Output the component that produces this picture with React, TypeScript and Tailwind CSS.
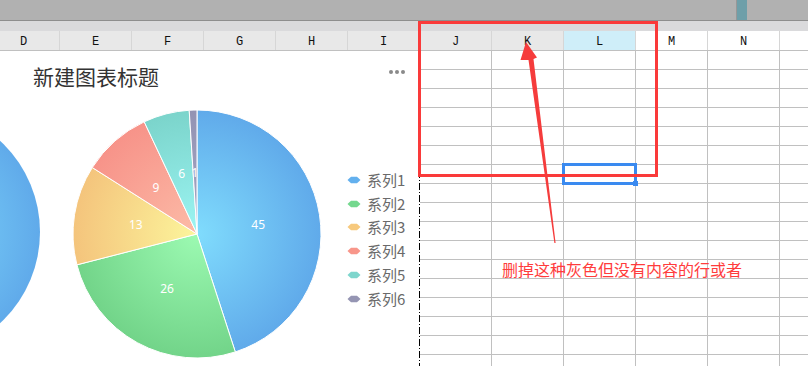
import React from "react";

const CJK = "'Noto Sans CJK SC', 'Noto Sans', sans-serif";

type Slice = { value: number; inner: string; outer: string; legend: string };

const slices: Slice[] = [
    { value: 45, inner: "#80dcfd", outer: "#60aaea", legend: "#63b0ee" },
    { value: 26, inner: "#9cfab2", outer: "#72d489", legend: "#74d88e" },
    { value: 13, inner: "#fcf59c", outer: "#f4c47c", legend: "#f7c97d" },
    { value: 9, inner: "#fcbba7", outer: "#f79389", legend: "#f8968a" },
    { value: 6, inner: "#9cf5f3", outer: "#7bd4cb", legend: "#7ed6cd" },
    { value: 1, inner: "#a6a6c4", outer: "#9393b3", legend: "#9595b3" },
];

const headerCols = [
    { label: "D", bg: "bg-[#e8e8e8]" },
    { label: "E", bg: "bg-[#e8e8e8]" },
    { label: "F", bg: "bg-[#e8e8e8]" },
    { label: "G", bg: "bg-[#e8e8e8]" },
    { label: "H", bg: "bg-[#e8e8e8]" },
    { label: "I", bg: "bg-[#e8e8e8]" },
    { label: "J", bg: "bg-[#e8e8e8]" },
    { label: "K", bg: "bg-[#e8e8e8]" },
    { label: "L", bg: "bg-[#cfeef9]" },
    { label: "M", bg: "bg-white" },
    { label: "N", bg: "bg-white" },
    { label: "", bg: "bg-white" },
];

const CX = 197;
const CY = 134;
const R = 124;

function pt(angle: number, r: number) {
    const rad = (angle * Math.PI) / 180;
    return [CX + r * Math.sin(rad), CY - r * Math.cos(rad)];
}

function PieChart() {
    const total = slices.reduce((s, x) => s + x.value, 0);
    let start = 0;
    const parts = slices.map((s, i) => {
        const sweep = (s.value / total) * 360;
        const a0 = start;
        const a1 = start + sweep;
        start = a1;
        const [x0, y0] = pt(a0, R);
        const [x1, y1] = pt(a1, R);
        const large = sweep > 180 ? 1 : 0;
        const d = `M${CX},${CY} L${x0},${y0} A${R},${R} 0 ${large} 1 ${x1},${y1} Z`;
        const [lx, ly] = pt((a0 + a1) / 2, R * 0.5);
        return { d, lx, ly, i, value: s.value };
    });

    return (
        <svg width={330} height={266} className="shrink-0">
            <defs>
                {slices.map((s, i) => (
                    <radialGradient key={i} id={`g${i}`} cx={CX} cy={CY} r={R} gradientUnits="userSpaceOnUse">
                        <stop offset="0%" stopColor={s.inner} />
                        <stop offset="100%" stopColor={s.outer} />
                    </radialGradient>
                ))}
                <radialGradient id="gl" cx={-84} cy={132} r={124} gradientUnits="userSpaceOnUse">
                    <stop offset="0%" stopColor="#80dcfd" />
                    <stop offset="100%" stopColor="#60aaea" />
                </radialGradient>
            </defs>
            <circle cx={-84} cy={132} r={124} fill="url(#gl)" />
            {parts.map((p) => (
                <path key={p.i} d={p.d} fill={`url(#g${p.i})`} stroke="#fff" strokeWidth={1} strokeLinejoin="round" />
            ))}
            {parts.map((p) => (
                <text
                    key={`t${p.i}`}
                    x={p.lx}
                    y={p.ly}
                    fill="#fff"
                    fontSize={12}
                    textAnchor="middle"
                    dominantBaseline="central"
                    style={{ fontFamily: "'Noto Sans', sans-serif" }}
                >
                    {p.value}
                </text>
            ))}
        </svg>
    );
}

function Legend() {
    return (
        <div className="ml-[17px] flex flex-col pt-[68px]">
            {slices.map((s, i) => (
                <div key={i} className="flex h-[23.8px] items-center gap-[6px]">
                    <svg width={14} height={8}>
                        <path d="M0.5,4 L4,0.8 L10,0.8 L13.5,4 L10,7.2 L4,7.2 Z" fill={s.legend} />
                    </svg>
                    <span className="text-[15px] leading-[16px] text-[#6a6a6a]" style={{ fontFamily: CJK }}>
                        系列{i + 1}
                    </span>
                </div>
            ))}
        </div>
    );
}

function ChartPanel() {
    return (
        <div className="flex w-[419px] shrink-0 flex-col bg-white">
            <div className="flex h-[49px] justify-between">
                <span
                    className="pl-[33px] pt-[15px] text-[21px] leading-[21px] text-[#333]"
                    style={{ fontFamily: CJK }}
                >
                    新建图表标题
                </span>
                <div className="flex gap-[2px] pr-[14px] pt-[19px]">
                    <div className="h-[4px] w-[4px] rounded-full bg-[#8a8a8a]" />
                    <div className="h-[4px] w-[4px] rounded-full bg-[#8a8a8a]" />
                    <div className="h-[4px] w-[4px] rounded-full bg-[#8a8a8a]" />
                </div>
            </div>
            <div className="flex">
                <PieChart />
                <Legend />
            </div>
        </div>
    );
}

function Grid() {
    const cells = Array.from({ length: 17 * 6 });
    return (
        <div className="grid grid-cols-[repeat(6,72px)] auto-rows-[19px]">
            {cells.map((_, i) => (
                <div key={i} className="border-r border-b border-[#c0c0c0]" />
            ))}
        </div>
    );
}

export default function App() {
    return (
        <div className="relative h-[366px] w-[808px] overflow-hidden bg-white">
            {/* title bar strip */}
            <div className="flex h-[21px] border-b border-[#8e8e8e] bg-[#b1b1b1]">
                <div className="w-[737px] border-r border-[#979797]" />
                <div className="w-[10px] bg-[#6e9fa9]" />
            </div>
            <div className="h-[10px] bg-[#dadadc]" />

            {/* column header */}
            <div className="flex h-[20px] border-b border-[#c0c0c0]">
                <div className="ml-[-12px] flex">
                    {headerCols.map((c, i) => (
                        <div
                            key={i}
                            className={`flex w-[72px] shrink-0 items-center justify-center border-r border-[#d6d6d6] pt-[2px] text-[12px] text-[#111] ${c.bg}`}
                            style={{ fontFamily: "'Liberation Mono', monospace" }}
                        >
                            {c.label}
                        </div>
                    ))}
                </div>
            </div>

            {/* body */}
            <div className="flex h-[315px]">
                <ChartPanel />
                <div className="w-px shrink-0 bg-[repeating-linear-gradient(to_bottom,#000_0_7px,transparent_7px_9px,#000_9px_10px,transparent_10px_12px)]" />
                <Grid />
            </div>

            {/* selection */}
            <div className="pointer-events-none absolute left-[562px] top-[163px] h-[22px] w-[75px] border-[3px] border-[#3a8af0]" />
            <div className="pointer-events-none absolute left-[633px] top-[181px] h-[5px] w-[5px] bg-[#3a8af0]" />

            {/* annotations */}
            <div className="pointer-events-none absolute left-[418px] top-[21px] h-[156px] w-[240px] border-[3px] border-[#fa3a3a]" />
            <svg className="pointer-events-none absolute left-0 top-0" width={808} height={366}>
                <polygon
                    points="526,42 537,57.5 533.5,59 555.6,243 554.4,243 528.5,60 520.5,60"
                    fill="#f53c3c"
                />
            </svg>
            <div
                className="pointer-events-none absolute left-[502px] top-[261px] text-[16px] leading-[16px] text-[#ff3c3c]"
                style={{ fontFamily: CJK }}
            >
                删掉这种灰色但没有内容的行或者
            </div>
        </div>
    );
}
